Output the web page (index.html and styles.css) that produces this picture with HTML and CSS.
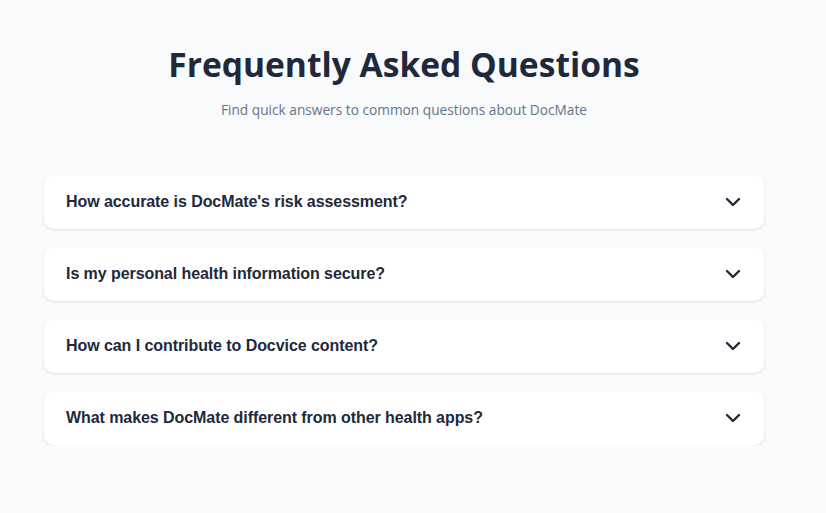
FILE: index.html
```html
<!DOCTYPE html>
<html lang="en">
<head>
<meta charset="utf-8">
<title>FAQ</title>
<link rel="stylesheet" href="styles.css">
</head>
<body>
<main class="page">
  <section class="faq">
    <h1 class="faq-title">Frequently Asked Questions</h1>
    <p class="faq-sub">Find quick answers to common questions about DocMate</p>
    <div class="faq-list">
      <div class="faq-item">
        <span class="faq-q">How accurate is DocMate's risk assessment?</span>
        <svg class="chev" viewBox="0 0 24 24" width="24" height="24"><path d="m6 9 6 6 6-6"/></svg>
      </div>
      <div class="faq-item">
        <span class="faq-q">Is my personal health information secure?</span>
        <svg class="chev" viewBox="0 0 24 24" width="24" height="24"><path d="m6 9 6 6 6-6"/></svg>
      </div>
      <div class="faq-item">
        <span class="faq-q">How can I contribute to Docvice content?</span>
        <svg class="chev" viewBox="0 0 24 24" width="24" height="24"><path d="m6 9 6 6 6-6"/></svg>
      </div>
      <div class="faq-item">
        <span class="faq-q">What makes DocMate different from other health apps?</span>
        <svg class="chev" viewBox="0 0 24 24" width="24" height="24"><path d="m6 9 6 6 6-6"/></svg>
      </div>
    </div>
  </section>
</main>
</body>
</html>
```

FILE: styles.css
```css
html, body {
  margin: 0;
  padding: 0;
  background: #f8fafc;
}
.page {
  padding: 41px 18px 0 0;
  display: flex;
  justify-content: center;
}
.faq {
  width: 720px;
}
.faq-title {
  margin: 0;
  text-align: center;
  font-family: "Open Sans", "Noto Sans", sans-serif;
  font-weight: 700;
  font-size: 33.6px;
  line-height: 47px;
  color: #1e293b;
}
.faq-sub {
  margin: 12px 0 0;
  text-align: center;
  font-family: "Open Sans", "Noto Sans", sans-serif;
  font-size: 13.7px;
  line-height: 20px;
  color: #64748b;
}
.faq-list {
  margin-top: 55px;
  display: flex;
  flex-direction: column;
  gap: 18px;
}
.faq-item {
  height: 54px;
  background: #fff;
  border-radius: 10px;
  box-shadow: 0 1px 3px rgba(15, 23, 42, 0.07), 0 1px 2px rgba(15, 23, 42, 0.04);
  display: flex;
  align-items: center;
  justify-content: space-between;
  padding: 0 19px 0 22px;
}
.faq-q {
  font-family: "Liberation Sans", Arial, sans-serif;
  font-weight: 700;
  font-size: 16px;
  letter-spacing: -0.07px;
  color: #1e293b;
}
.chev {
  width: 24px;
  height: 24px;
  fill: none;
  stroke: #1e293b;
  stroke-width: 2.4;
  stroke-linecap: round;
  stroke-linejoin: round;
}
```
